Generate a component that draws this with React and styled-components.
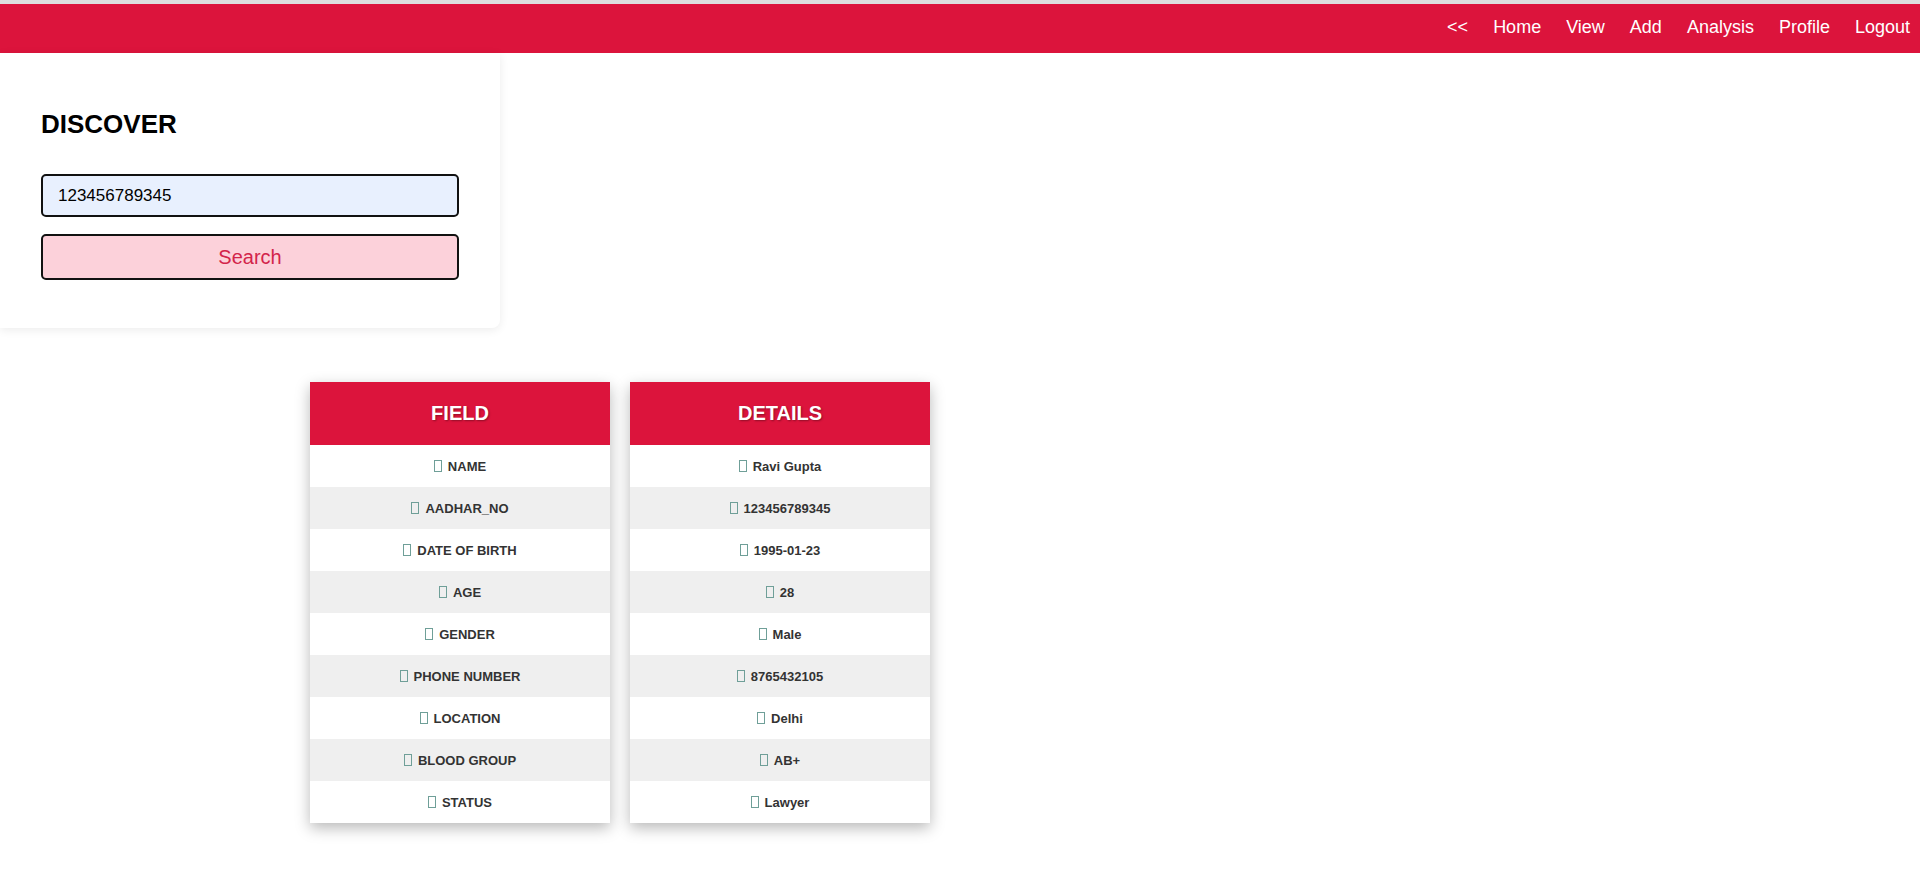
import React from 'react';
import styled, { createGlobalStyle } from 'styled-components';

const GlobalStyle = createGlobalStyle`
  body {
    margin: 0;
    background: #fff;
    font-family: "Liberation Sans", Arial, sans-serif;
  }
`;

const Page = styled.div`
  min-height: 883px;
  border-top: 4px solid #dedede;
`;

const NavBar = styled.nav`
  height: 49px;
  background: #dc143c;
  display: flex;
  justify-content: flex-end;
  align-items: center;
  gap: 25px;
  padding: 0 10px 2px 0;
  box-sizing: border-box;
`;

const NavLink = styled.a`
  color: #fff;
  font-size: 18px;
  text-decoration: none;
  cursor: pointer;
`;

const Card = styled.section`
  width: 500px;
  box-sizing: border-box;
  padding: 56px 41px 48px;
  background: #fff;
  border-radius: 0 0 8px 0;
  box-shadow: 0 2px 10px rgba(0, 0, 0, 0.08);
`;

const Title = styled.h2`
  margin: 0 0 34px;
  font-size: 26px;
  font-weight: bold;
  color: #000;
`;

const SearchInput = styled.input`
  display: block;
  width: 100%;
  height: 43px;
  box-sizing: border-box;
  padding: 0 15px;
  border: 2px solid #111;
  border-radius: 5px;
  background: #e8f0fe;
  font-family: inherit;
  font-size: 17px;
  color: #000;
  outline: none;
`;

const SearchButton = styled.button`
  display: block;
  width: 100%;
  height: 46px;
  margin-top: 17px;
  border: 2px solid #111;
  border-radius: 5px;
  background: #fcd1da;
  color: #d3244a;
  font-family: inherit;
  font-size: 20px;
  cursor: pointer;
`;

const Tables = styled.div`
  display: flex;
  gap: 20px;
  padding: 54px 0 0 310px;
`;

const DataTable = styled.table`
  width: 300px;
  border-collapse: collapse;
  box-shadow: 0 5px 14px rgba(0, 0, 0, 0.28);
`;

const HeadCell = styled.th`
  height: 63px;
  background: #dc143c;
  color: #fff;
  font-size: 20px;
  font-weight: bold;
  text-shadow: 1px 1px 2px rgba(0, 0, 0, 0.35);
  padding: 0;
`;

const Row = styled.tr`
  background: ${p => (p.$alt ? '#efefef' : '#fff')};
`;

const Cell = styled.td`
  height: 42px;
  padding: 0;
  text-align: center;
  font-size: 13px;
  font-weight: bold;
  color: #333;
`;

const Glyph = styled.span`
  display: inline-block;
  width: 6px;
  height: 10px;
  margin-right: 6px;
  border: 1px solid #6f9f98;
  vertical-align: -1px;
`;

const fields = [
  ['NAME', 'Ravi Gupta'],
  ['AADHAR_NO', '123456789345'],
  ['DATE OF BIRTH', '1995-01-23'],
  ['AGE', '28'],
  ['GENDER', 'Male'],
  ['PHONE NUMBER', '8765432105'],
  ['LOCATION', 'Delhi'],
  ['BLOOD GROUP', 'AB+'],
  ['STATUS', 'Lawyer']
];

function InfoTable({ title, col }) {
  return (
    <DataTable>
      <thead>
        <tr>
          <HeadCell>{title}</HeadCell>
        </tr>
      </thead>
      <tbody>
        {fields.map((f, i) => (
          <Row key={f[0]} $alt={i % 2 === 1}>
            <Cell>
              <Glyph />
              {f[col]}
            </Cell>
          </Row>
        ))}
      </tbody>
    </DataTable>
  );
}

export default function App() {
  return (
    <Page>
      <GlobalStyle />
      <NavBar>
        <NavLink>&lt;&lt;</NavLink>
        <NavLink>Home</NavLink>
        <NavLink>View</NavLink>
        <NavLink>Add</NavLink>
        <NavLink>Analysis</NavLink>
        <NavLink>Profile</NavLink>
        <NavLink>Logout</NavLink>
      </NavBar>
      <Card>
        <Title>DISCOVER</Title>
        <SearchInput defaultValue="123456789345" />
        <SearchButton>Search</SearchButton>
      </Card>
      <Tables>
        <InfoTable title="FIELD" col={0} />
        <InfoTable title="DETAILS" col={1} />
      </Tables>
    </Page>
  );
}
